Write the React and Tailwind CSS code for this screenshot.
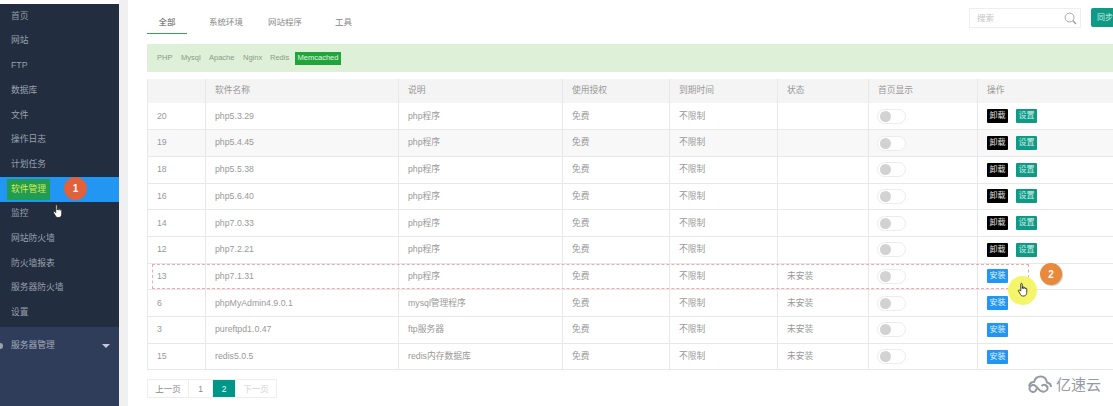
const FONT = "font-['Liberation_Sans','Noto_Sans_CJK_SC',sans-serif]";

const menu = ['首页', '网站', 'FTP', '数据库', '文件', '操作日志', '计划任务', '软件管理', '监控', '网站防火墙', '防火墙报表', '服务器防火墙', '设置'];

const rows = [
  ['20', 'php5.3.29', 'php程序', '', true],
  ['19', 'php5.4.45', 'php程序', '', true],
  ['18', 'php5.5.38', 'php程序', '', true],
  ['16', 'php5.6.40', 'php程序', '', true],
  ['14', 'php7.0.33', 'php程序', '', true],
  ['12', 'php7.2.21', 'php程序', '', true],
  ['13', 'php7.1.31', 'php程序', '未安装', false],
  ['6', 'phpMyAdmin4.9.0.1', 'mysql管理程序', '未安装', false],
  ['3', 'pureftpd1.0.47', 'ftp服务器', '未安装', false],
  ['15', 'redis5.0.5', 'redis内存数据库', '未安装', false],
];

function HandCursor({ className }) {
  return (
    <svg viewBox="0 0 16 20" className={className}>
      <path
        d="M5 2.200c0-1.500 2-1.500 2 0V8l.2-1.600c.3-1.200 1.800-1 1.800.2v1.600l.2-1c.3-1.100 1.800-.9 1.800.3v1l.2-.4c.4-1 1.800-.7 1.800.4V13c0 2.600-1.500 5-3.500 5H7.500C6 18 5.200 17 4.500 15.800L2 11.500c-.7-1.200.8-2.300 1.800-1.200L5 11.500Z"
        fill="#fff"
        stroke="#222"
        strokeWidth="1.100"
      />
    </svg>
  );
}

function Sidebar() {
  return (
    <aside className="flex flex-col w-[119px] h-full pt-1 shrink-0">
      <div className="h-[323px] bg-[#222d3f] overflow-hidden">
        <ul>
          {menu.map((m, i) => (
            <li
              key={m}
              className={`relative flex items-center h-[24.7px] pl-[11px] text-[8.75px] text-[#98a0ac] ${i === 7 ? 'bg-[#2196f3]' : ''}`}
            >
              {i === 7 ? (
                <span className="-ml-1 px-1 py-[5px] bg-[#1f9d55] text-[#dfe84a] leading-[11px]">{m}</span>
              ) : (
                m
              )}
            </li>
          ))}
        </ul>
      </div>
      <div className="flex-1 bg-[#2f3d5a]">
        <div className="flex items-center justify-between h-[37px] pr-[9px] text-[8.75px] text-[#a3abb9]">
          <div className="flex items-center gap-2">
            <span className="w-[3px] h-[6px] rounded-r-full bg-[#9aa3b0]" />
            <span>服务器管理</span>
          </div>
          <span className="w-0 h-0 border-x-[4px] border-t-[4px] border-x-transparent border-t-[#c4cad4]" />
        </div>
      </div>
    </aside>
  );
}

function TopBar() {
  return (
    <div className="flex items-start justify-between h-[44px]">
      <div className="flex items-start pt-[5px] text-[8.5px] text-[#888]">
        <span className="w-10 h-[29px] pt-[11px] text-center border-b border-[#3f9b5f] text-[#555]">全部</span>
        <span className="ml-[22px] pt-[11px]">系统环境</span>
        <span className="ml-[25px] pt-[11px]">网站程序</span>
        <span className="ml-[33px] pt-[11px]">工具</span>
      </div>
      <div className="flex mt-2">
        <div className="flex items-center justify-between w-[112px] h-5 pl-[7px] pr-[3px] border border-[#eee] text-[8.5px] text-[#c4c4c4]">
          <span>搜索</span>
          <svg viewBox="0 0 14 14" className="w-[13px] h-[13px]" fill="none" stroke="#999" strokeWidth="0.9">
            <circle cx="6" cy="6" r="4.800" />
            <path d="M9.500 9.500 13 13" strokeWidth="1.400" />
          </svg>
        </div>
        <div className="w-[22px] h-[19px] ml-[10px] pl-1.5 rounded-l-[2px] bg-[#109a85] text-[8px] leading-[19px] whitespace-nowrap text-[#cfeee8]">同步</div>
      </div>
    </div>
  );
}

function FilterBar() {
  return (
    <div className="flex items-center h-7 pl-[10px] bg-[#dff0d8] text-[7.5px] text-[#8a9a88]">
      <span className="w-[24px]">PHP</span>
      <span className="w-[28px]">Mysql</span>
      <span className="w-[34px]">Apache</span>
      <span className="w-[27px]">Nginx</span>
      <span className="w-[25px]">Redis</span>
      <span className="flex items-center justify-center w-[46px] h-[13px] bg-[#20a53a] text-[#e4f6e6]">Memcached</span>
    </div>
  );
}

function Toggle() {
  return (
    <span className="flex items-center w-[29px] h-[15px] -ml-px pl-[2px] rounded-full bg-white border border-[#ebebeb]">
      <span className="w-[11px] h-[11px] rounded-full bg-[#d2d2d2]" />
    </span>
  );
}

function Actions({ installed }) {
  const btn = 'flex items-center justify-center w-[21px] h-[14px] text-[8px] rounded-[1px]';
  if (!installed) return <span className={`${btn} bg-[#2196f3] text-[#e6f3fe]`}>安装</span>;
  return (
    <div className="flex gap-[8px]">
      <span className={`${btn} bg-black text-[#e0e0e0]`}>卸载</span>
      <span className={`${btn} bg-[#109a85] text-[#cfeee8]`}>设置</span>
    </div>
  );
}

function SoftTable() {
  const th = 'pl-[9px] font-normal text-left border-l border-[#e8e8e8]';
  const td = 'pl-[9px] border-l border-[#e8e8e8]';
  return (
    <table className="w-[966px] mt-[7px] table-fixed border-collapse text-[8.75px] text-[#999]">
      <colgroup>
        <col className="w-[58px]" />
        <col className="w-[193px]" />
        <col className="w-[164px]" />
        <col className="w-[107px]" />
        <col className="w-[108px]" />
        <col className="w-[91px]" />
        <col className="w-[109px]" />
        <col className="w-[136px]" />
      </colgroup>
      <thead>
        <tr className="h-[24px] bg-[#f4f4f4]">
          <th className={th}></th>
          <th className={th}>软件名称</th>
          <th className={th}>说明</th>
          <th className={th}>使用授权</th>
          <th className={th}>到期时间</th>
          <th className={th}>状态</th>
          <th className={th}>首页显示</th>
          <th className={th}>操作</th>
        </tr>
      </thead>
      <tbody>
        {rows.map((r, i) => (
          <tr key={r[0]} className={`h-[26.7px] border-b border-[#e8e8e8] ${i === 1 ? 'bg-[#f8f8f8]' : ''}`}>
            <td className={td}>{r[0]}</td>
            <td className={td}>{r[1]}</td>
            <td className={td}>{r[2]}</td>
            <td className={td}>免费</td>
            <td className={td}>不限制</td>
            <td className={td}>{r[3]}</td>
            <td className={td}><Toggle /></td>
            <td className={td}><Actions installed={r[4]} /></td>
          </tr>
        ))}
      </tbody>
    </table>
  );
}

function Pagination() {
  const cell = 'flex items-center justify-center h-full border-r border-[#eee] last:border-r-0';
  return (
    <div className="flex w-[130px] h-[19px] mt-[9px] border border-[#eee] text-[8.5px] text-[#888]">
      <span className={`${cell} w-[41px]`}>上一页</span>
      <span className={`${cell} w-6`}>1</span>
      <span className={`${cell} w-[23px] bg-[#009688] text-[#dff]`}>2</span>
      <span className={`${cell} flex-1 text-[#d4d4d4]`}>下一页</span>
    </div>
  );
}

function Watermark() {
  return (
    <div className="absolute left-[1027px] top-[375px] flex items-center gap-[4px] text-[#949aa4]">
      <svg viewBox="0 0 25 19" className="w-[25px] h-[19px]" fill="none" stroke="currentColor" strokeWidth="2">
        <path d="M2 11.500C2.500 8.500 4.500 7 7 7 8 3.500 10.500 1.500 13.500 1.500c3.500 0 6 2.500 6.500 6 2.500.5 4 2 4 4.500" />
        <path d="M9.500 13.500a3.500 3.500 0 1 1-1-2.500c1.500 1.500 3 3 4.500 4.500 2.500 2 6.500 1.500 7.500-1.500a3.500 3.500 0 0 0-6-3" />
      </svg>
      <span className="text-[15px] leading-none">亿速云</span>
    </div>
  );
}

export default function App() {
  return (
    <div className={`relative flex w-[1113px] h-[406px] overflow-hidden bg-white ${FONT}`}>
      <Sidebar />
      <div className="w-[9px] h-full bg-[#f0f0f0] shrink-0" />
      <main className="flex-1 min-w-0 pl-[19px]">
        <TopBar />
        <FilterBar />
        <SoftTable />
        <Pagination />
      </main>

      <div className="absolute left-[64px] top-[177px] flex items-center justify-center w-[23px] h-[23px] rounded-full bg-[#e0623c] text-[10px] font-bold text-white">1</div>
      <HandCursor className="absolute left-[52px] top-[204px] w-[12px] h-[15px]" />

      <div className="absolute left-[152px] top-[264px] w-[877px] h-[25px] border border-dashed border-[#ecaab2]" />
      <div className="absolute left-[1008px] top-[276px] w-[29px] h-[29px] rounded-full bg-[#f5f56b]" />
      <HandCursor className="absolute left-[1017px] top-[282px] w-[12px] h-[16px]" />
      <div className="absolute left-[1040px] top-[263px] flex items-center justify-center w-[22px] h-[22px] rounded-full bg-[#e8893c] shadow-[1px_1px_1px_#ccc] text-[10px] font-bold text-white">2</div>

      <Watermark />
    </div>
  );
}
